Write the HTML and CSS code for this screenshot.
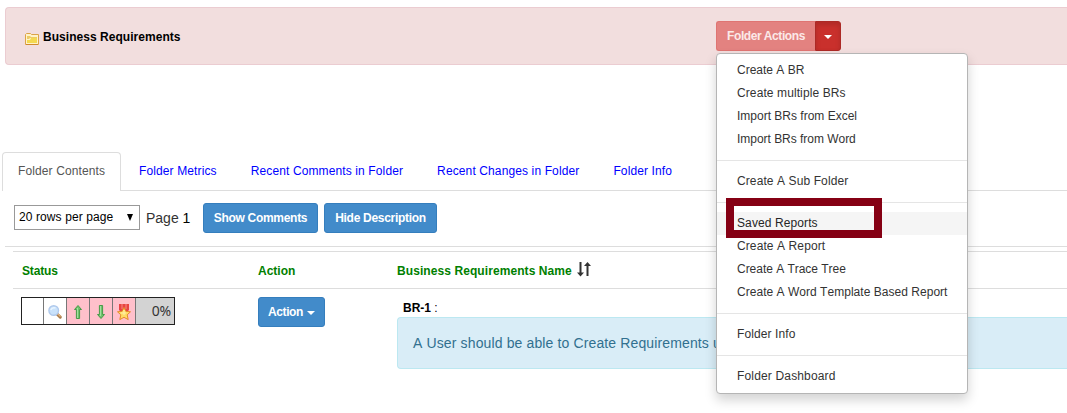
FILE: index.html
```html
<!DOCTYPE html>
<html lang="en">
<head>
<meta charset="utf-8">
<title>Business Requirements</title>
<link rel="stylesheet" href="styles.css">
</head>
<body>
<header class="folder-bar">
  <svg class="folder-icon" width="14" height="12" viewBox="0 0 14 12">
    <path d="M.5 11.5V1.5L1.500 .5H5.500L6.500 1.500H13.500V11.500Z" fill="#fff3c8" stroke="#dca347"/>
    <path d="M2 3h3l1 1h6v1H5L4 6H2z" fill="#edcb66"/>
    <path d="M2 10V7h3l1-2h6v5z" fill="#f4d94f"/>
    <path d="M1 11.500h12" stroke="#d08a2c"/>
  </svg>
  <h1 class="folder-title">Business Requirements</h1>
  <div class="folder-actions">
    <button class="btn btn-danger">Folder Actions</button><button class="btn btn-toggle"><span class="caret"></span></button>
    <ul class="menu">
      <li>Create A BR</li>
      <li class="wide">Create multiple BRs</li>
      <li>Import BRs from Excel</li>
      <li class="tight">Import BRs from Word</li>
      <li class="divider"></li>
      <li class="wide">Create A Sub Folder</li>
      <li class="divider"></li>
      <li class="hover wide">Saved Reports<span class="callout"></span></li>
      <li class="wide">Create A Report</li>
      <li class="tight">Create A Trace Tree</li>
      <li class="long">Create A Word Template Based Report</li>
      <li class="divider"></li>
      <li class="wide">Folder Info</li>
      <li class="divider"></li>
      <li class="wider">Folder Dashboard</li>
    </ul>
  </div>
</header>

<nav class="tabs">
  <a class="tab active">Folder Contents</a>
  <a class="tab">Folder Metrics</a>
  <a class="tab">Recent Comments in Folder</a>
  <a class="tab">Recent Changes in Folder</a>
  <a class="tab">Folder Info</a>
</nav>

<div class="toolbar">
  <div class="select"><span>20 rows per page</span><svg width="6" height="7" viewBox="0 0 6 7"><path d="M0 0h6L3 7z" fill="#000"/></svg></div>
  <span class="page">Page <span class="page-number">1</span></span>
  <button class="btn btn-primary show">Show Comments</button>
  <button class="btn btn-primary hide">Hide Description</button>
</div>

<main class="grid">
  <div class="row head">
    <div class="status-title">Status</div>
    <div>Action</div>
    <div class="name-title">Business Requirements Name
      <svg width="14" height="15" viewBox="0 0 14 15"><path d="M3.500 0V12M10.500 3V14" stroke="#333" stroke-width="2" fill="none"/><path d="M0 10.500h7L3.500 14.500zM7 4h7L10.500 0z" fill="#333"/></svg>
    </div>
  </div>
  <div class="row body">
    <div class="status-cell">
      <div class="status">
        <span class="cell first"></span>
        <span class="cell"><svg width="16" height="16" viewBox="0 0 16 16"><path d="M10 10l3.300 3.200" stroke="#a97b4b" stroke-width="3" stroke-linecap="round"/><path d="M10.500 9.500l3 3" stroke="#e3b47d" stroke-width="1.200"/><circle cx="6.700" cy="6.500" r="4.800" fill="#c9e2fb" stroke="#b0c9ec" stroke-width="1.400"/><path d="M3.800 6Q5 3 8.500 4" stroke="#e9f5ff" stroke-width="1.600" fill="none"/></svg></span>
        <span class="cell pink"><svg width="16" height="16" viewBox="0 0 16 16"><path d="M8 1.500L11.500 5.500H9.600V14.500H6.400V5.500H4.500Z" fill="#6fc46c" stroke="#489a49"/><path d="M7.500 4v10" stroke="#a4dfa0"/></svg></span>
        <span class="cell pink"><svg width="16" height="16" viewBox="0 0 16 16"><path d="M8 14.500L11.500 10.500H9.600V1.500H6.400V10.500H4.500Z" fill="#6fc46c" stroke="#489a49"/><path d="M7.500 2v10" stroke="#a4dfa0"/></svg></span>
        <span class="cell pink"><svg width="16" height="17" viewBox="0 0 16 17"><path d="M3 0h10v6l-2 2H5L3 6z" fill="#e84343"/><path d="M6 0v5M10 0v5" stroke="#f58d83"/><path d="M8 3.500l1.900 3.800 4.600.5-3.300 3 1 4.800L8 13.300l-4.200 2.300 1-4.800-3.300-3 4.600-.5z" fill="#ffdc65" stroke="#e58b2c"/><path d="M8 6v5M5 9h5" stroke="#fff0ab"/></svg></span>
        <span class="percent">0%</span>
      </div>
    </div>
    <div><button class="btn btn-primary action">Action<span class="caret"></span></button></div>
    <div class="requirement">
      <div class="req-id"><b>BR-1</b> :</div>
      <div class="description">A User should be able to Create Requirements using</div>
    </div>
  </div>
</main>
</body>
</html>
```
FILE: styles.css
```css
* { box-sizing: border-box; }
body {
  margin: 0;
  padding-top: 7px;
  height: 413px;
  overflow: hidden;
  background: #fff;
  color: #333;
  font: 12px/17px "Liberation Sans", Arial, sans-serif;
  letter-spacing: .1px;
  font-kerning: none;
}
.folder-bar {
  display: flex;
  height: 58px;
  margin-left: 5px;
  padding: 13px 0 0 19px;
  border: 1px solid #ebccd1;
  border-right: 0;
  border-radius: 4px 0 0 4px;
  background: #f2dede;
}
.folder-icon { margin: 12px 4px 0 0; }
.folder-title { width: 673px; margin: 8px 0 0; color: #000; font-size: 12px; line-height: 17px; letter-spacing: .04px; }
.folder-actions { position: relative; display: flex; height: 30px; }
.btn {
  height: 30px;
  padding: 0;
  border: 1px solid #357ebd;
  border-radius: 3px;
  color: #fff;
  font: bold 12px/18px "Liberation Sans", Arial, sans-serif;
  letter-spacing: -.3px;
  white-space: nowrap;
}
.btn-primary { background: #428bca; }
.btn-danger { width: 99px; border-color: #df7472; border-right: 0; border-radius: 3px 0 0 3px; background: #e38280; color: #fbe9e8; letter-spacing: -.4px; }
.btn-toggle { width: 26px; border-color: #ac2925; border-radius: 0 3px 3px 0; background: #c9302c; box-shadow: inset 0 3px 5px rgba(0,0,0,.125); }
.caret { display: inline-block; vertical-align: middle; border: 4px solid transparent; border-top-color: #fff; border-bottom: 0; }
.menu {
  position: absolute;
  z-index: 2;
  top: 32px;
  left: 0;
  width: 252px;
  margin: 0;
  padding: 5px 0;
  border: 1px solid #b5b5b5;
  border-radius: 4px;
  background: #fff;
  box-shadow: 0 6px 12px rgba(0,0,0,.175);
  letter-spacing: 0;
  list-style: none;
}
.menu li { position: relative; height: 23px; padding: 0 20px; line-height: 23px; white-space: nowrap; }
.menu .wide { letter-spacing: .1px; }
.menu .wider { letter-spacing: .16px; }
.menu .tight { letter-spacing: -.03px; }
.menu .long { letter-spacing: .03px; }
.menu .divider { height: 1px; margin: 9px 0; background: #e5e5e5; }
.menu .hover { background: #f5f5f5; color: #262626; z-index: 1; }
.callout { position: absolute; left: 9px; top: -14px; width: 156px; height: 40px; border: 8px solid #850014; }
.tabs { display: flex; height: 39px; margin: 87px 0 0 2px; border-bottom: 1px solid #ddd; }
.tab { height: 39px; padding: 11px 16px 0; margin-right: 2px; color: #00f; letter-spacing: .12px; white-space: nowrap; }
.active { width: 119px; padding: 10px 15px 0; border: 1px solid #ddd; border-bottom: 0; border-radius: 4px 4px 0 0; background: #fff; color: #555; }
.toolbar { display: flex; height: 56px; margin-left: 5px; padding: 12px 0 0 9px; border-bottom: 1px solid #ddd; }
.select { display: flex; width: 126px; height: 25px; margin-top: 2px; padding: 0 6px 0 4px; align-items: center; justify-content: space-between; border: 1px solid #999; color: #000; }
.page { width: 57px; margin: 5px 0 0 6px; font-size: 14px; line-height: 20px; letter-spacing: 0; }
.page-number { color: #000; }
.show { width: 115px; margin-right: 6px; }
.hide { width: 113px; }
.grid { margin: 4px 0 0 13px; border-top: 1px solid #ddd; }
.row { display: grid; grid-template-columns: 245px 139px 1fr; }
.head { height: 37px; padding-top: 11px; border-bottom: 1px solid #ddd; color: green; font-weight: bold; letter-spacing: 0; }
.status-title { padding-left: 9px; letter-spacing: -.15px; }
.name-title { display: flex; gap: 5px; letter-spacing: .08px; white-space: nowrap; }
.name-title svg { margin-top: -1px; }
.body { padding-top: 8px; }
.status-cell { padding-left: 8px; }
.status { display: flex; width: 154px; height: 28px; border: 1px solid #222; }
.cell { display: flex; width: 23px; align-items: center; justify-content: center; padding-top: 2px; border-right: 1px solid #777; }
.first { width: 22px; }
.pink { background: #ffc0cb; }
.percent { flex: 1; padding: 0 3px 0 0; background: #d3d3d3; font: 14px/26px "Noto Sans", sans-serif; letter-spacing: -.2px; text-align: right; }
.action { width: 67px; letter-spacing: -.4px; }
.action .caret { margin-left: 4px; }
.req-id { height: 20px; padding: 3px 0 0 6px; color: #000; letter-spacing: 0; }
.description { height: 52px; padding: 15px; border: 1px solid #bce8f1; border-right: 0; border-radius: 4px 0 0 4px; background: #d9edf7; color: #31708f; font-size: 14px; line-height: 20px; letter-spacing: .13px; white-space: nowrap; }
```
